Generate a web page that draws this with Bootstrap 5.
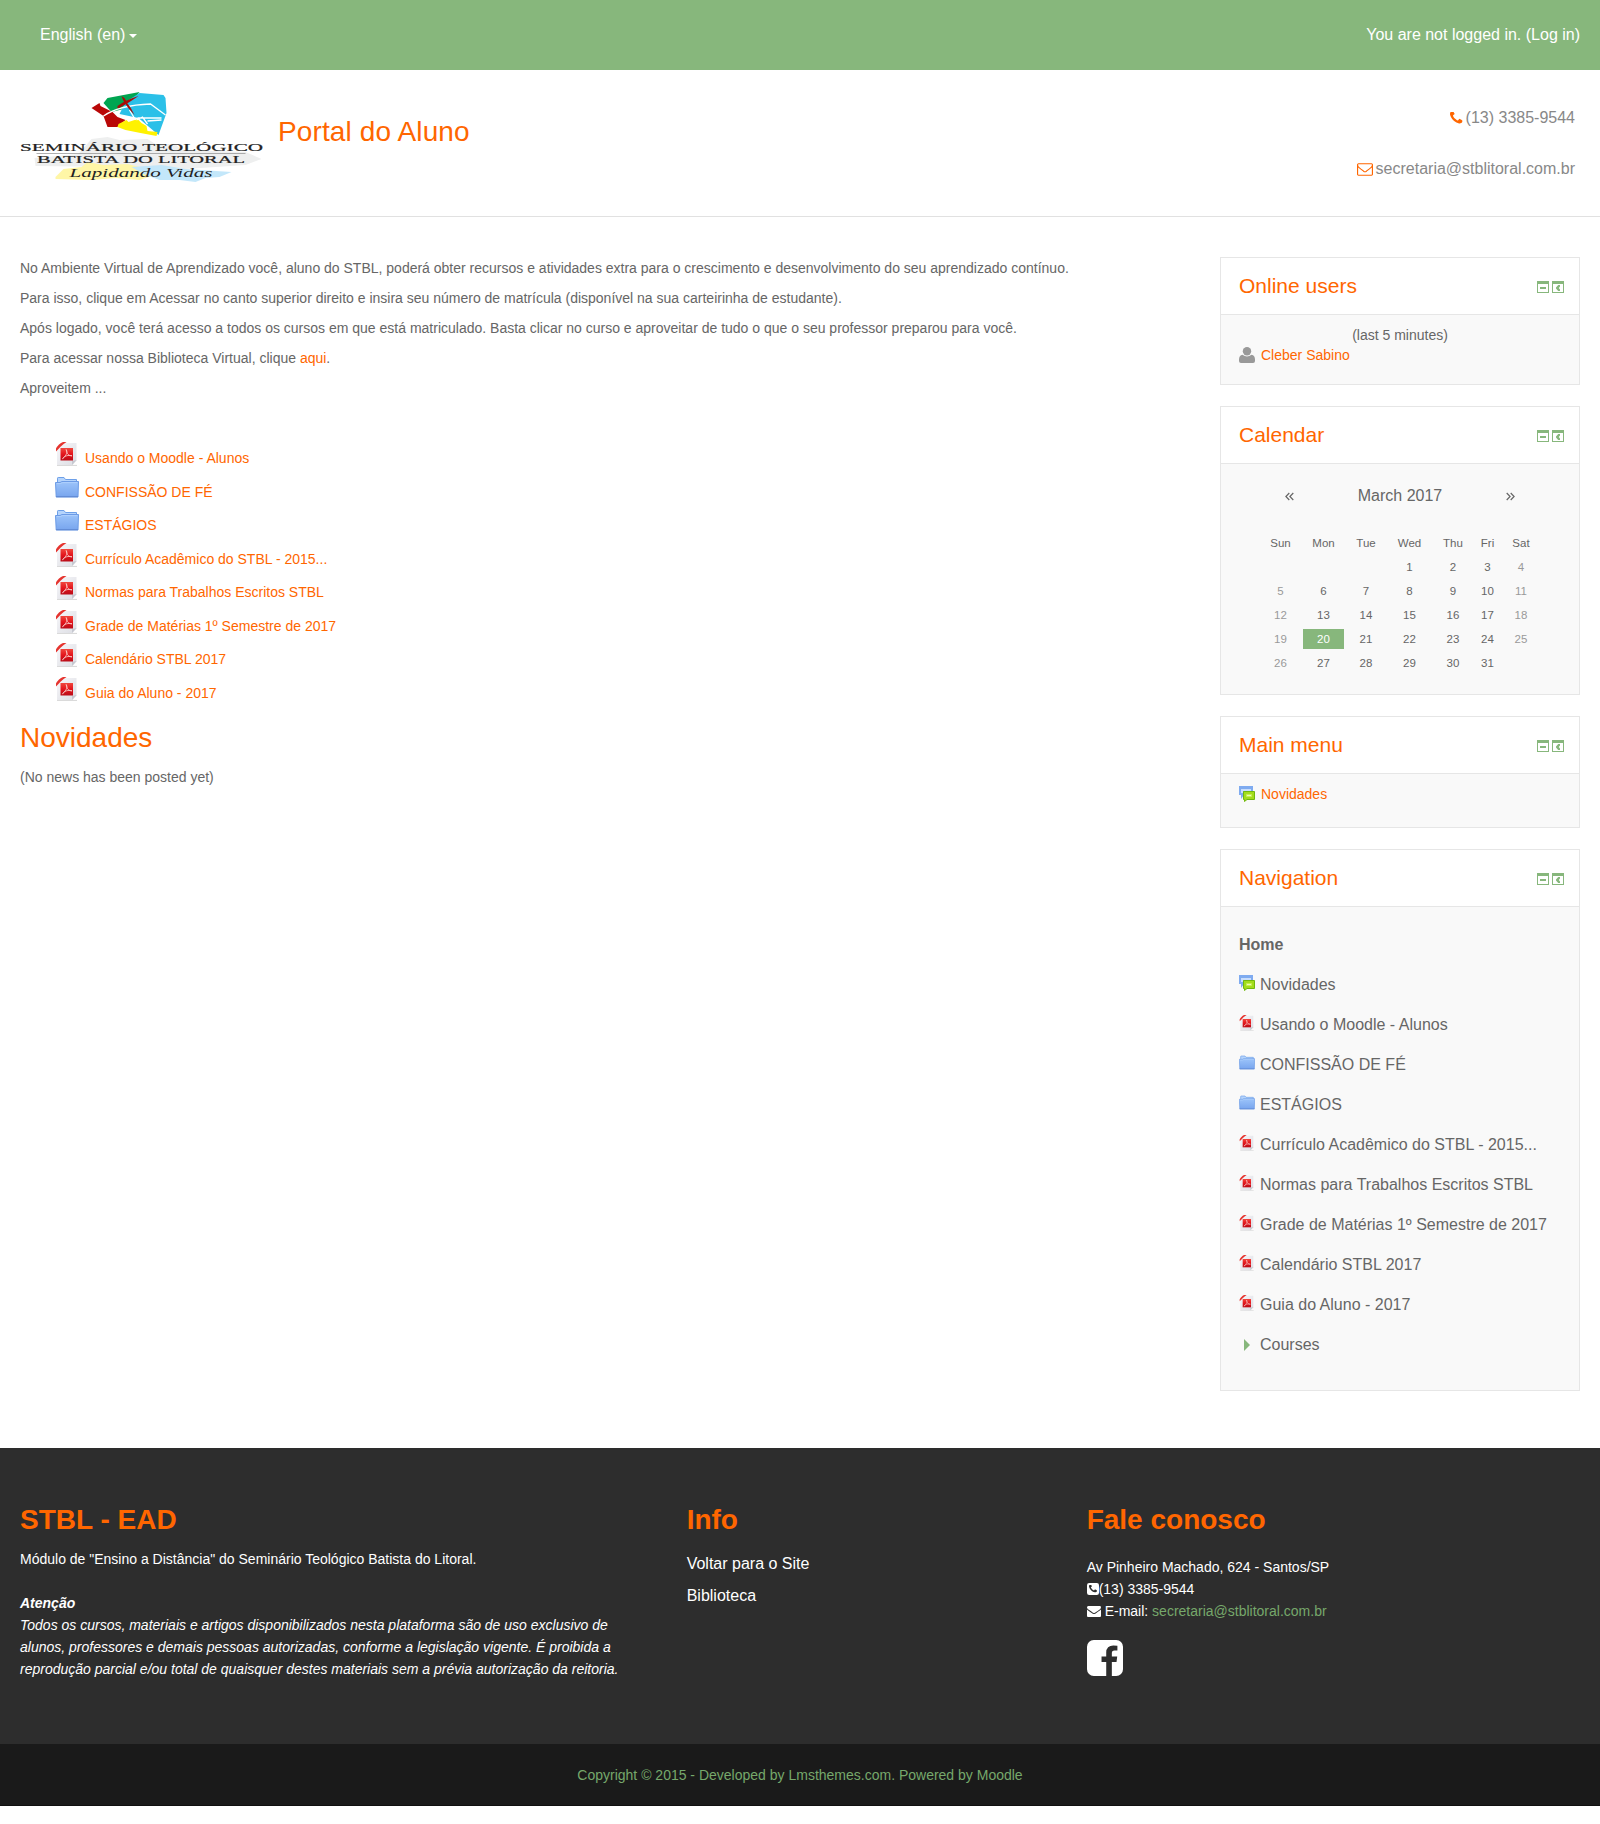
<!DOCTYPE html>
<html lang="en">
<head>
<meta charset="utf-8">
<meta name="viewport" content="width=device-width, initial-scale=1">
<title>Portal do Aluno</title>
<link rel="stylesheet" href="https://cdn.jsdelivr.net/npm/bootstrap@5.3.0/dist/css/bootstrap.min.css">
<style>
  body { font-family: "Liberation Sans", Arial, sans-serif; font-size: 14px; line-height: 20px; color: #666; background: #fff; }
  a { color: #f60; text-decoration: none; }
  h1, h2, h3 { margin: 0; color: #f60; font-weight: 400; }
  svg { display: block; flex: none; }
  .px-page { padding-left: 20px; padding-right: 20px; }
  .topbar { height: 70px; background: #87b77c; font-size: 16px; color: #fff; }
  .topbar a { color: #fff; }
  .lang-caret { border: 4px solid transparent; border-top-color: #fff; border-bottom: 0; margin: 1px 0 0 4px; }
  .site-head { height: 147px; border-bottom: 1px solid #e1e1e1; }
  .site-title { font-size: 28px; line-height: 40px; margin: 42px 0 0 13px; letter-spacing: .12px; }
  .head-contact { font-size: 16px; color: #888; padding: 38px 5px 0 0; gap: 31px; }
  .head-contact div { gap: 3px; }
  .main-area { padding-top: 40px; padding-bottom: 57px; }
  .intro p { margin: 0 0 10px; }
  .intro { padding-top: 1px; }
  .res-list { margin: 39px 0 0 35px; }
  .res-list li { height: 33.5px; gap: 6px; }
  .res-list svg { margin-top: 5px; }
  .res-list a { margin-top: 11px; }
  .news-title { font-size: 28px; line-height: 40px; margin: 13px 0 9px; }
  .side { width: 360px; gap: 21px; }
  .block { border: 1px solid #e6e6e6; }
  .block-head { height: 57px; border-bottom: 1px solid #e6e6e6; padding: 0 15px 0 18px; }
  .block-head h2 { font-size: 21px; line-height: 30px; margin-top: -1px; }
  .block-head div { gap: 3px; margin-top: 2px; }
  .block-body { background: #f9f9f9; padding: 0 18px; }
  .block-users { height: 69px; padding-top: 10px; }
  .block-menu { height: 53px; padding-top: 10px; }
  .block-cal { height: 230px; }
  .item-row { gap: 6px; }
  .cal-top { padding: 22px 27px 0 27px; height: 65px; }
  .cal-month { font-size: 16px; }
  .cal { table-layout: fixed; width: 284px; margin: 0 auto; border-collapse: separate; border-spacing: 4px; font-size: 11.5px; text-align: center; }
  .cal th, .cal td { height: 20px; padding: 0; line-height: 20px; font-weight: 400; }
  .cal td:first-child, .cal td:last-child { color: #999; }
  .cal .today { background: #87b77c; color: #fff; }
  .navtree { font-size: 16px; line-height: 40px; padding-top: 18px; padding-bottom: 25px; }
  .navtree li { height: 40px; gap: 5px; }
  .navtree svg { margin-top: -4px; }
  .foot { background: #2d2d2d; color: #fff; height: 296px; padding-top: 52px; line-height: 22px; }
  .foot .row { --bs-gutter-x: 40px; }
  .foot h3 { font-size: 28px; line-height: 40px; font-weight: 700; }
  .foot-about { margin-top: 8px; }
  .foot-addr { margin-top: 16px; }
  .foot-social { margin-top: 18px; }
  .foot-links { font-size: 16px; line-height: 32px; margin-top: 8px; }
  .foot-links a { color: #fff; }
  .green, .green a { color: #76a86b; }
  .copy { background: #1a1a1a; height: 62px; border-bottom: 1px solid #101010; }
</style>
<script src="https://cdn.jsdelivr.net/npm/bootstrap@5.3.0/dist/js/bootstrap.bundle.min.js"></script>
</head>
<body>

<svg width="0" height="0" class="position-absolute" aria-hidden="true">
  <defs>
    <linearGradient id="gPage" x1="0" y1="0" x2="1" y2="1"><stop offset="0" stop-color="#f7f7fa"/><stop offset="1" stop-color="#dcdde3"/></linearGradient>
    <linearGradient id="gRed" x1="0" y1="0" x2="0" y2="1"><stop offset="0" stop-color="#f0473e"/><stop offset=".5" stop-color="#e3141c"/><stop offset="1" stop-color="#b90c18"/></linearGradient>
    <linearGradient id="gFold" x1="0" y1="0" x2="0" y2="1"><stop offset="0" stop-color="#9cc4fa"/><stop offset="1" stop-color="#78a5ee"/></linearGradient>
  </defs>
  <symbol id="pdf" viewBox="0 0 24 24">
    <path d="M2 23.4h20" stroke="#d6d6d6" stroke-width="1"/>
    <path d="M8 1H21.500V18.500L17.500 23H2V8z" fill="url(#gPage)"/>
    <path d="M21.500 18l-4.500 5V19z" fill="#c6c8d0"/>
    <path d="M1 9.500V6.500Q2 4.500 4 2.500T8 0H11.500Q7.500 2.500 5.500 4.800T1 9.500z" fill="#e5342f"/>
    <path d="M5.500 6H18v12.500H5.500z" fill="url(#gRed)"/>
    <path d="M11.200 7.500c1.200 2.500 1 5-3.700 9.300 2.300-3 5.500-4 9.500-3-3.200.2-5-1.700-5.800-6.300z" fill="none" stroke="#fbd5d2" stroke-width=".8"/>
  </symbol>
  <symbol id="folder" viewBox="0 0 24 24">
    <path d="M2.500 8V2.200Q2.500 1.500 3.200 1.500H9l1.500 2H21.500V8z" fill="#b5d4fc" stroke="#6d9fe8"/>
    <path d="M.5 6.500H5L7 5.500H23.500L23 21H1.200z" fill="url(#gFold)" stroke="#6c9be6"/>
    <path d="M1.600 7.600H5.300L7.300 6.600H22.400" fill="none" stroke="#b5d3fd" stroke-width=".8"/>
    <path d="M1 20.700H23" stroke="#5f88d2"/>
  </symbol>
  <symbol id="forum" viewBox="0 0 16 16">
    <path d="M0 0H14V9H5L2 13V9H0z" fill="#7fabf0"/><path d="M2 3H12V5H4v2H2z" fill="#c9defc"/>
    <path d="M4.500 5.500H15.500V13.500H8L5.500 15.500V13.500H4.500z" fill="#a3dc1c" stroke="#71b80e"/>
    <path d="M7.500 8.500H12.500V10.500H7.500z" fill="#e9fbb5" stroke="#c5f04b"/>
  </symbol>
  <symbol id="hide" viewBox="0 0 12 12"><path d="M0 0H12V12H0zM1 3V11H11V3z" fill="#87b77c" fill-rule="evenodd"/><path d="M3 6H9V8H3z" fill="#87b77c"/></symbol>
  <symbol id="dock" viewBox="0 0 12 12"><path d="M0 0H12V12H0zM1 3V11H11V3z" fill="#87b77c" fill-rule="evenodd"/><path d="M8 4H6.200L4 6.500V7.500L6.200 10H8V8.500L6.800 7 8 5.500z" fill="#87b77c"/></symbol>
  <symbol id="phone" viewBox="192 256 1408 1408"><path d="M1600 1240q0 27-10 70.500t-21 68.500q-21 50-122 106-94 51-186 51-27 0-53-3.500t-57.500-12.500-47-14.500-55.500-20.500-49-18q-98-35-175-83-127-79-264-216t-216-264q-48-77-83-175-3-9-18-49t-20.500-55.500-14.500-47-12.500-57.500-3.500-53q0-92 51-186 56-101 106-122 25-11 68.500-21t70.500-10q14 0 21 3 18 6 53 76 11 19 30 54t35 63.500 31 53.500q3 4 17.500 25t21.500 35.500 7 28.500q0 20-28.500 50t-62 55-62 53-28.500 46q0 9 5 22.500t8.500 20.500 14 24 11.500 19q76 137 174 235t235 174q2 1 19 11.500t24 14 20.500 8.500 22.500 5q18 0 46-28.500t53-62 55-62 50-28.500q14 0 28.500 7t35.500 21.500 25 17.500q25 15 53.500 31t63.500 35 54 30q70 35 76 53 3 7 3 21z"/></symbol>
</svg>

<nav class="topbar px-page d-flex justify-content-between align-items-center">
  <a href="#" class="d-flex align-items-center ps-3 ms-1">English (en)<span class="lang-caret"></span></a>
  <span>You are not logged in. (<a href="#">Log in</a>)</span>
</nav>

<header class="site-head px-page d-flex justify-content-between">
  <div class="d-flex">
    <svg class="mt-3" width="245" height="100" viewBox="20.500 86 245 100">
      <path d="M92 139l16-2 12 3 28-1 8 5 20 0 6 6 64 2 16 7-16 6-60 4-70-2-80-1-1-8 44-4z" fill="#eeefef"/>
      <path d="M56 177l8-8 18-2 6-5 16 3 24-1 20 5 10 5-18 6-24-2-24 2-36-1z" fill="#fff6a6"/>
      <path d="M132 167l30-2 24 4 46 3-12 5-14 1-10 4-16-2-20 0-16-6z" fill="#c3e7fa"/>
      <path d="M104 103l4-5 32-6-12 16-16 4z" fill="#00a551"/>
      <path d="M140 93l12 1 12 1 2 3 1 15-8 22-20-17-19-4 6-12z" fill="#2bc0e8"/>
      <path d="M92 108l8-5 1 3 12 6 5 5 8 3-8 7-10 0-4-11z" fill="#b90807"/>
      <path d="M119 124l8-4 2 2 9-3 4 4 5 3 1 5 10 1-1 4-16-3-15-3-8-3z" fill="#fff200"/>
      <path d="M104 116q16-11 47-12l15 11M130 110l6 10M138 118l24 0M148 124l-5-7-6 3M148 121l14-1" fill="none" stroke="#fff" stroke-width="1.300"/>
      <path d="M118 106q8-6 21-10-10 7-16 10-6 4-5 1zM122 96q4 2 5 6 5 6 8 13-7-7-11-14z" fill="#a80c08"/>
      <path d="M37 153.500H246" stroke="#8c8c8c" stroke-width=".7"/>
      <g font-family="Liberation Serif, serif" fill="#222" stroke="#222" stroke-width=".2">
        <text x="20.500" y="151.300" textLength="243" lengthAdjust="spacingAndGlyphs" font-size="11">SEMINÁRIO TEOLÓGICO</text>
        <text x="37.500" y="162.700" textLength="208" lengthAdjust="spacingAndGlyphs" font-size="11">BATISTA DO LITORAL</text>
        <text x="70" y="176.500" font-size="11.500" font-style="italic" textLength="143" lengthAdjust="spacingAndGlyphs" stroke="none">Lapidando Vidas</text>
      </g>
    </svg>
    <h1 class="site-title">Portal do Aluno</h1>
  </div>
  <div class="head-contact d-flex flex-column align-items-end">
    <div class="d-flex align-items-center"><svg width="12.600" height="12.600" fill="#f60"><use href="#phone"/></svg><span>(13) 3385-9544</span></div>
    <div class="d-flex align-items-center"><svg width="16" height="13" viewBox="0 256 1792 1408" fill="#f60"><path d="M1664 1504v-768q-32 36-69 66-268 206-426 338-51 43-83 67t-86.500 48.500-102.500 24.500h-2q-48 0-102.500-24.500t-86.500-48.500-83-67q-158-132-426-338-37-30-69-66v768q0 13 9.500 22.500t22.500 9.500h1472q13 0 22.500-9.500t9.500-22.500zm0-1051v-24.500l-.5-13-3-12.500-5.500-9-9-7.500-14-2.500h-1472q-13 0-22.500 9.500t-9.500 22.500q0 168 147 284 193 152 401 317 6 5 35 29.500t46 37.500 44.500 31.500 50.500 27.500 43 9h2q20 0 43-9t50.500-27.500 44.500-31.500 46-37.500 35-29.500q208-165 401-317 54-43 100.500-115.500t46.500-131.500zm128-37v1088q0 66-47 113t-113 47h-1472q-66 0-113-47t-47-113v-1088q0-66 47-113t113-47h1472q66 0 113 47t47 113z"/></svg><span>secretaria@stblitoral.com.br</span></div>
  </div>
</header>

<main class="main-area px-page d-flex justify-content-between align-items-start">
  <section>
    <div class="intro">
      <p>No Ambiente Virtual de Aprendizado você, aluno do STBL, poderá obter recursos e atividades extra para o crescimento e desenvolvimento do seu aprendizado contínuo.</p>
      <p>Para isso, clique em Acessar no canto superior direito e insira seu número de matrícula (disponível na sua carteirinha de estudante).</p>
      <p>Após logado, você terá acesso a todos os cursos em que está matriculado. Basta clicar no curso e aproveitar de tudo o que o seu professor preparou para você.</p>
      <p>Para acessar nossa Biblioteca Virtual, clique <a href="#">aqui</a>.</p>
      <p>Aproveitem ...</p>
    </div>
    <ul class="res-list list-unstyled mb-0">
      <li class="d-flex align-items-start"><svg width="24" height="24"><use href="#pdf"/></svg><a href="#">Usando o Moodle - Alunos</a></li>
      <li class="d-flex align-items-start"><svg width="24" height="24"><use href="#folder"/></svg><a href="#">CONFISSÃO DE FÉ</a></li>
      <li class="d-flex align-items-start"><svg width="24" height="24"><use href="#folder"/></svg><a href="#">ESTÁGIOS</a></li>
      <li class="d-flex align-items-start"><svg width="24" height="24"><use href="#pdf"/></svg><a href="#">Currículo Acadêmico do STBL - 2015...</a></li>
      <li class="d-flex align-items-start"><svg width="24" height="24"><use href="#pdf"/></svg><a href="#">Normas para Trabalhos Escritos STBL</a></li>
      <li class="d-flex align-items-start"><svg width="24" height="24"><use href="#pdf"/></svg><a href="#">Grade de Matérias 1º Semestre de 2017</a></li>
      <li class="d-flex align-items-start"><svg width="24" height="24"><use href="#pdf"/></svg><a href="#">Calendário STBL 2017</a></li>
      <li class="d-flex align-items-start"><svg width="24" height="24"><use href="#pdf"/></svg><a href="#">Guia do Aluno - 2017</a></li>
    </ul>
    <h2 class="news-title">Novidades</h2>
    <div>(No news has been posted yet)</div>
  </section>

  <aside class="side d-flex flex-column flex-shrink-0">
    <div class="block">
      <div class="block-head d-flex justify-content-between align-items-center"><h2>Online users</h2><div class="d-flex"><svg width="12" height="12"><use href="#hide"/></svg><svg width="12" height="12"><use href="#dock"/></svg></div></div>
      <div class="block-body block-users">
        <div class="text-center">(last 5 minutes)</div>
        <div class="item-row d-flex align-items-center"><svg width="16" height="16" viewBox="0 0 16 16" fill="#999"><circle cx="8" cy="4.300" r="4.200"/><path d="M3.500 7.800Q8 11 12.500 7.800 16 8.500 16 12.500V14Q16 16 14 16H2Q0 16 0 14V12.500Q0 8.500 3.500 7.800z"/></svg><a href="#">Cleber Sabino</a></div>
      </div>
    </div>

    <div class="block">
      <div class="block-head d-flex justify-content-between align-items-center"><h2>Calendar</h2><div class="d-flex"><svg width="12" height="12"><use href="#hide"/></svg><svg width="12" height="12"><use href="#dock"/></svg></div></div>
      <div class="block-body block-cal">
        <div class="cal-top d-flex justify-content-between align-items-start">
          <svg width="40" height="20" viewBox="0 0 40 20" fill="none" stroke="#666" stroke-width="1.200"><path d="M23.300 7l-3.400 3.500 3.400 3.500M27.300 7l-3.400 3.500 3.400 3.500"/></svg>
          <span class="cal-month">March 2017</span>
          <svg width="40" height="20" viewBox="0 0 40 20" fill="none" stroke="#666" stroke-width="1.200"><path d="M12.700 7l3.400 3.500-3.400 3.500M16.700 7l3.400 3.500-3.400 3.500"/></svg>
        </div>
        <table class="cal">
          <colgroup><col style="width:37px"><col style="width:41px"><col style="width:36px"><col style="width:43px"><col style="width:36px"><col style="width:25px"><col style="width:34px"></colgroup>
          <tr><th>Sun</th><th>Mon</th><th>Tue</th><th>Wed</th><th>Thu</th><th>Fri</th><th>Sat</th></tr>
          <tr><td></td><td></td><td></td><td>1</td><td>2</td><td>3</td><td>4</td></tr>
          <tr><td>5</td><td>6</td><td>7</td><td>8</td><td>9</td><td>10</td><td>11</td></tr>
          <tr><td>12</td><td>13</td><td>14</td><td>15</td><td>16</td><td>17</td><td>18</td></tr>
          <tr><td>19</td><td class="today">20</td><td>21</td><td>22</td><td>23</td><td>24</td><td>25</td></tr>
          <tr><td>26</td><td>27</td><td>28</td><td>29</td><td>30</td><td>31</td><td></td></tr>
        </table>
      </div>
    </div>

    <div class="block">
      <div class="block-head d-flex justify-content-between align-items-center"><h2>Main menu</h2><div class="d-flex"><svg width="12" height="12"><use href="#hide"/></svg><svg width="12" height="12"><use href="#dock"/></svg></div></div>
      <div class="block-body block-menu">
        <div class="item-row d-flex align-items-center"><svg width="16" height="16"><use href="#forum"/></svg><a href="#">Novidades</a></div>
      </div>
    </div>

    <div class="block">
      <div class="block-head d-flex justify-content-between align-items-center"><h2>Navigation</h2><div class="d-flex"><svg width="12" height="12"><use href="#hide"/></svg><svg width="12" height="12"><use href="#dock"/></svg></div></div>
      <ul class="block-body navtree list-unstyled mb-0">
        <li class="fw-bold">Home</li>
        <li class="d-flex align-items-center"><svg width="16" height="16"><use href="#forum"/></svg>Novidades</li>
        <li class="d-flex align-items-center"><svg width="16" height="16"><use href="#pdf"/></svg>Usando o Moodle - Alunos</li>
        <li class="d-flex align-items-center"><svg width="16" height="16"><use href="#folder"/></svg>CONFISSÃO DE FÉ</li>
        <li class="d-flex align-items-center"><svg width="16" height="16"><use href="#folder"/></svg>ESTÁGIOS</li>
        <li class="d-flex align-items-center"><svg width="16" height="16"><use href="#pdf"/></svg>Currículo Acadêmico do STBL - 2015...</li>
        <li class="d-flex align-items-center"><svg width="16" height="16"><use href="#pdf"/></svg>Normas para Trabalhos Escritos STBL</li>
        <li class="d-flex align-items-center"><svg width="16" height="16"><use href="#pdf"/></svg>Grade de Matérias 1º Semestre de 2017</li>
        <li class="d-flex align-items-center"><svg width="16" height="16"><use href="#pdf"/></svg>Calendário STBL 2017</li>
        <li class="d-flex align-items-center"><svg width="16" height="16"><use href="#pdf"/></svg>Guia do Aluno - 2017</li>
        <li class="d-flex align-items-center"><svg width="16" height="16" viewBox="0 0 16 16" fill="#87b77c"><path d="M5 4l6 6-6 6z"/></svg>Courses</li>
      </ul>
    </div>
  </aside>
</main>

<footer>
  <div class="foot px-page">
    <div class="row">
      <div class="col-5">
        <h3>STBL - EAD</h3>
        <div class="foot-about">Módulo de "Ensino a Distância" do Seminário Teológico Batista do Litoral.</div>
        <br>
        <em><b>Atenção</b><br>Todos os cursos, materiais e artigos disponibilizados nesta plataforma são de uso exclusivo de alunos, professores e demais pessoas autorizadas, conforme a legislação vigente. É proibida a reprodução parcial e/ou total de quaisquer destes materiais sem a prévia autorização da reitoria.</em>
      </div>
      <div class="col-3">
        <h3>Info</h3>
        <ul class="foot-links list-unstyled mb-0"><li><a href="#">Voltar para o Site</a></li><li><a href="#">Biblioteca</a></li></ul>
      </div>
      <div class="col-4">
        <h3>Fale conosco</h3>
        <div class="foot-addr">Av Pinheiro Machado, 624 - Santos/SP</div>
        <div class="d-flex align-items-center"><svg width="12" height="12" viewBox="0 0 12 12"><rect width="12" height="12" rx="2.200" fill="#fff"/><svg x="2" y="2" width="8" height="8" fill="#2d2d2d"><use href="#phone"/></svg></svg>(13) 3385-9544</div>
        <div class="d-flex align-items-center"><svg class="me-1" width="14" height="11" viewBox="0 256 1792 1408" fill="#fff"><path d="M1792 710v794q0 66-47 113t-113 47h-1472q-66 0-113-47t-47-113v-794q44 49 101 87 362 246 497 345 57 42 92.500 65.500t94.500 48 110 24.500h2q51 0 110-24.500t94.500-48 92.500-65.500q170-123 498-345 57-39 100-87zm0-294q0 79-49 151t-122 123q-376 261-468 325-10 7-42.500 31t-54 38.500-52 32.500-57.500 27-50 9h-2q-23 0-50-9t-57.500-27-52-32.500-54-38.500-42.500-31q-91-64-262-182.500t-205-142.500q-62-42-117-115.500t-55-136.500q0-78 41.500-130t118.500-52h1472q65 0 112.500 47t47.500 113z"/></svg>E-mail:&nbsp;<span class="green"><a href="#">secretaria@stblitoral.com.br</a></span></div>
        <svg class="foot-social" width="36" height="36" viewBox="128 128 1536 1536" fill="#fff"><path d="M1376 128q119 0 203.500 84.500t84.500 203.500v960q0 119-84.500 203.500t-203.500 84.500h-188v-595h199l30-232h-229v-148q0-56 23.500-84t91.500-28l122-1v-207q-63-9-178-9-136 0-217.500 80t-81.500 226v171h-200v232h200v595h-532q-119 0-203.500-84.500t-84.500-203.500v-960q0-119 84.500-203.500t203.500-84.500h960z"/></svg>
      </div>
    </div>
  </div>
  <div class="copy green d-flex align-items-center justify-content-center"><span>Copyright © 2015 - Developed by Lmsthemes.com. Powered by <a href="#">Moodle</a></span></div>
</footer>
</body>
</html>
